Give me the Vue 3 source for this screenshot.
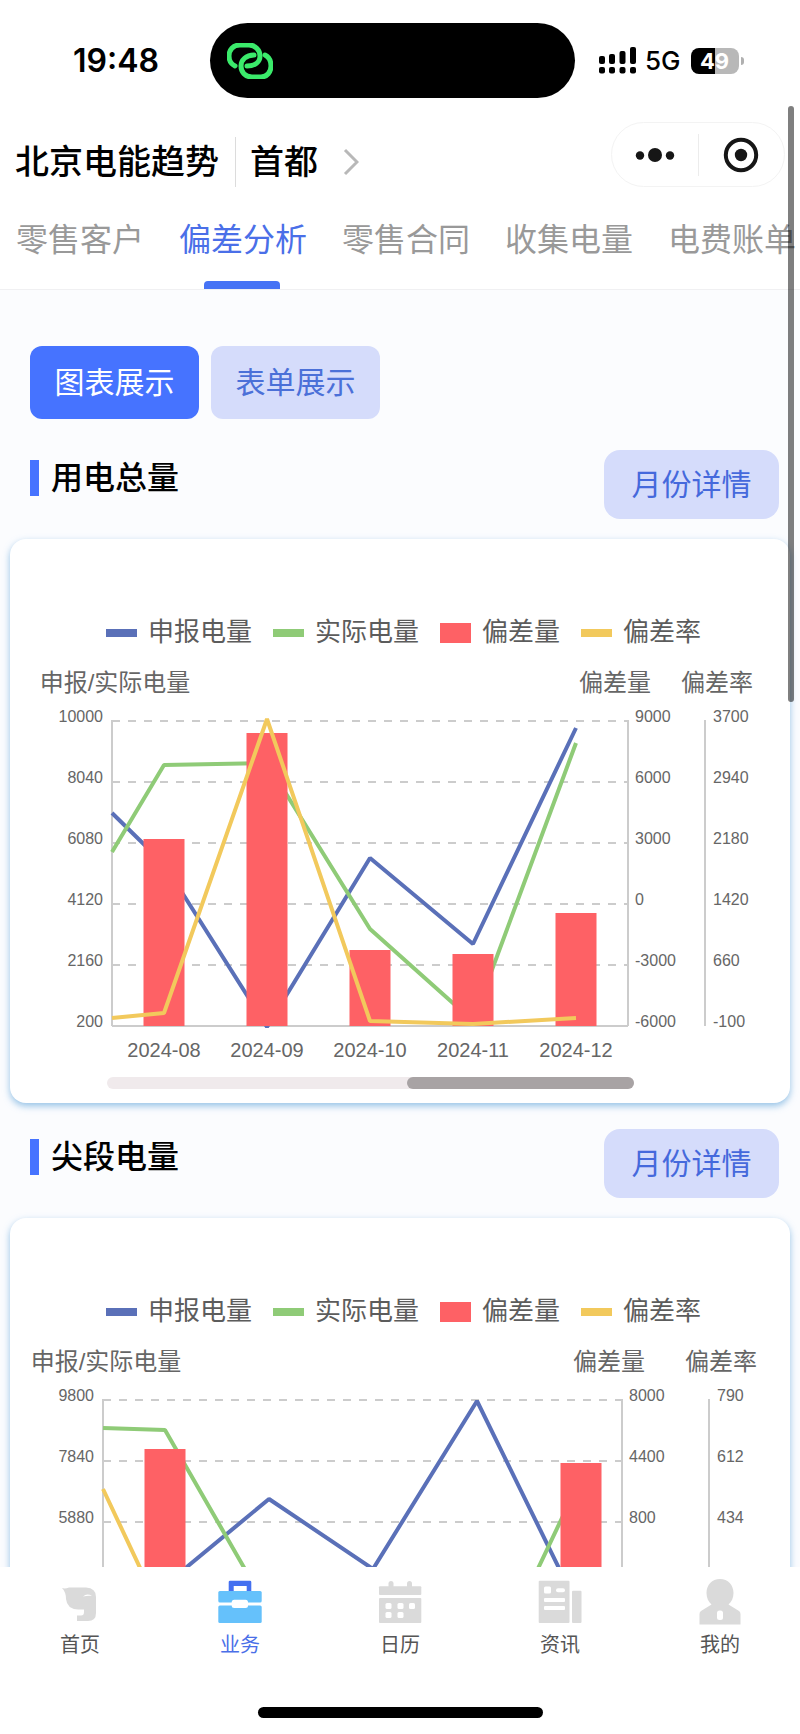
<script setup>
import { ref } from 'vue'

const tabs = ['零售客户', '偏差分析', '零售合同', '收集电量', '电费账单']
const activeTab = ref('偏差分析')

const views = ['图表展示', '表单展示']
const activeView = ref('图表展示')

const legend = [
  { name: '申报电量', kind: 'declared' },
  { name: '实际电量', kind: 'actual' },
  { name: '偏差量', kind: 'deviation' },
  { name: '偏差率', kind: 'rate' },
]

const gridRows = [0, 1, 2, 3, 4, 5]
const TOP = 71
const STEP = 61
const BOTTOM = TOP + STEP * 5
const BAR_WIDTH = 41
const rowY = (i) => TOP + STEP * i

const sections = [
  {
    title: '用电总量',
    left: 102,
    right: 618,
    rateAxis: 695,
    names: [105, 605, 707],
    leftTicks: ['10000', '8040', '6080', '4120', '2160', '200'],
    rightTicks: ['9000', '6000', '3000', '0', '-3000', '-6000'],
    rateTicks: ['3700', '2940', '2180', '1420', '660', '-100'],
    months: [
      { x: 154, label: '2024-08' },
      { x: 257, label: '2024-09' },
      { x: 360, label: '2024-10' },
      { x: 463, label: '2024-11' },
      { x: 566, label: '2024-12' },
    ],
    bars: [
      { x: 154, y: 189 },
      { x: 257, y: 83 },
      { x: 360, y: 300 },
      { x: 463, y: 304 },
      { x: 566, y: 263 },
    ],
    declared: '102,163 154,214 257,377 360,208 463,294 566,78',
    actual: '102,202 154,115 257,113 360,279 463,371 566,93',
    rate: '102,368 154,363 257,69 360,371 463,374 566,368',
    slider: { x: 97, width: 527, thumbX: 397, thumbWidth: 227 },
  },
  {
    title: '尖段电量',
    left: 93,
    right: 612,
    rateAxis: 699,
    names: [96, 599, 711],
    leftTicks: ['9800', '7840', '5880'],
    rightTicks: ['8000', '4400', '800'],
    rateTicks: ['790', '612', '434'],
    months: [],
    bars: [
      { x: 155, y: 120 },
      { x: 571, y: 134 },
    ],
    declared: '93,330 155,256 259,170 363,240 467,72 571,284',
    actual: '93,99 155,101 259,282 363,350 467,368 571,149',
    rate: '93,160 155,292 259,360 363,370 467,370 571,370',
    slider: null,
  },
]

const navItems = [
  { name: '首页', icon: 'home' },
  { name: '业务', icon: 'work' },
  { name: '日历', icon: 'calendar' },
  { name: '资讯', icon: 'news' },
  { name: '我的', icon: 'me' },
]
const activeNav = ref('业务')
</script>

<template>
  <div class="page">
    <header class="header">
      <div class="status">
        <div class="time">19:48</div>
        <div class="island">
          <svg class="link-icon" viewBox="0 0 46 36" aria-hidden="true">
            <path d="M8 23C4 21 2 17 2 13C2 7 6 2 13 2H22C28 2 33 7 33 13C33 19 28 23 20 23" />
            <path d="M27 12C19 12 14 17 14 23C14 29 18 34 25 34H34C40 34 44 29 44 23C44 18 42 14 38 12" />
          </svg>
        </div>
        <div class="signals">
          <svg class="bars-icon" viewBox="0 0 37 27" aria-hidden="true">
            <rect x="0" y="9" width="6" height="8" rx="2" />
            <rect x="10" y="7" width="6" height="10" rx="2" />
            <rect x="20.5" y="4" width="6" height="13" rx="2" />
            <rect x="31" y="0" width="6" height="17" rx="2" />
            <rect x="0" y="20" width="6" height="6.5" rx="2" />
            <rect x="10" y="20" width="6" height="6.5" rx="2" />
            <rect x="20.5" y="20" width="6" height="6.5" rx="2" />
            <rect x="31" y="20" width="6" height="6.5" rx="2" />
          </svg>
          <span class="network">5G</span>
          <span class="battery"><span class="level">49</span><i class="nub"></i></span>
        </div>
      </div>

      <div class="navbar">
        <div class="place">
          <h1 class="app-title">北京电能趋势</h1>
          <button class="region" type="button">
            首都
            <svg class="chevron" viewBox="0 0 16 28" aria-hidden="true"><path d="M2 2L14 14L2 26" /></svg>
          </button>
        </div>
        <div class="capsule">
          <button class="capsule-btn more" type="button" aria-label="更多">
            <svg viewBox="0 0 40 16" aria-hidden="true">
              <circle cx="5" cy="8.5" r="4.2" /><circle cx="20" cy="8" r="7" /><circle cx="35" cy="8.5" r="4.2" />
            </svg>
          </button>
          <button class="capsule-btn close" type="button" aria-label="关闭">
            <svg viewBox="0 0 36 36" aria-hidden="true">
              <circle class="ring" cx="18" cy="18" r="15.2" /><circle cx="18" cy="18" r="6.2" />
            </svg>
          </button>
        </div>
      </div>

      <nav class="tabs">
        <button
          v-for="tab in tabs"
          :key="tab"
          type="button"
          class="tab"
          :class="{ active: tab === activeTab }"
          @click="activeTab = tab"
        >{{ tab }}</button>
      </nav>
    </header>

    <main class="content">
      <div class="views">
        <button
          v-for="view in views"
          :key="view"
          type="button"
          class="view-btn"
          :class="{ active: view === activeView }"
          @click="activeView = view"
        >{{ view }}</button>
      </div>

      <section v-for="s in sections" :key="s.title" class="section">
        <div class="section-head">
          <h2 class="section-title">{{ s.title }}</h2>
          <button type="button" class="detail-btn">月份详情</button>
        </div>
        <div class="card">
          <ul class="legend">
            <li v-for="l in legend" :key="l.name" class="legend-item">
              <i class="swatch" :class="l.kind"></i>{{ l.name }}
            </li>
          </ul>
          <svg class="chart" viewBox="0 0 780 453" role="img" :aria-label="s.title">
            <g class="names">
              <text :x="s.names[0]" y="41">申报/实际电量</text>
              <text :x="s.names[1]" y="41">偏差量</text>
              <text :x="s.names[2]" y="41">偏差率</text>
            </g>
            <g class="grid">
              <line v-for="i in gridRows.slice(0, 5)" :key="i" :x1="s.left" :x2="s.right" :y1="rowY(i)" :y2="rowY(i)" />
            </g>
            <g class="axis">
              <line :x1="s.left" :x2="s.left" :y1="TOP - 1" :y2="BOTTOM" />
              <line :x1="s.right" :x2="s.right" :y1="TOP - 1" :y2="BOTTOM" />
              <line :x1="s.rateAxis" :x2="s.rateAxis" :y1="TOP - 1" :y2="BOTTOM" />
              <line :x1="s.left" :x2="s.right" :y1="BOTTOM" :y2="BOTTOM" />
            </g>
            <g class="ticks">
              <text v-for="(t, i) in s.leftTicks" :key="'l' + t" class="end" :x="s.left - 9" :y="rowY(i) + 1">{{ t }}</text>
              <text v-for="(t, i) in s.rightTicks" :key="'r' + t" :x="s.right + 7" :y="rowY(i) + 1">{{ t }}</text>
              <text v-for="(t, i) in s.rateTicks" :key="'p' + t" :x="s.rateAxis + 8" :y="rowY(i) + 1">{{ t }}</text>
            </g>
            <g class="months">
              <text v-for="m in s.months" :key="m.label" :x="m.x" y="407">{{ m.label }}</text>
            </g>
            <polyline class="line declared" :points="s.declared" />
            <polyline class="line actual" :points="s.actual" />
            <rect
              v-for="b in s.bars"
              :key="b.x"
              class="bar"
              :x="b.x - BAR_WIDTH / 2"
              :y="b.y"
              :width="BAR_WIDTH"
              :height="BOTTOM - b.y"
            />
            <polyline class="line rate" :points="s.rate" />
            <g v-if="s.slider">
              <rect class="track" :x="s.slider.x" y="427" :width="s.slider.width" height="12" rx="6" />
              <rect class="thumb" :x="s.slider.thumbX" y="427" :width="s.slider.thumbWidth" height="12" rx="6" />
            </g>
          </svg>
        </div>
      </section>
    </main>

    <footer class="tabbar">
      <nav class="tabbar-items">
        <a
          v-for="n in navItems"
          :key="n.name"
          href="#"
          class="tabbar-item"
          :class="{ active: n.name === activeNav }"
          @click.prevent="activeNav = n.name"
        >
          <svg class="tabbar-icon" viewBox="0 0 46 46" aria-hidden="true">
            <template v-if="n.icon === 'home'">
              <path d="M5 9Q8 10 12 8.5H29Q39 9 39 18V34Q39 42 31 42H20V36.5H24Q27 36.5 27 33V30.5H21Q10 30 9 20Q9 13 5 9Z" />
              <path class="hole" d="M26 17.5Q30 14 35 17Q31 16.500 26 17.5Z" />
            </template>
            <template v-else-if="n.icon === 'work'">
              <path class="handle" fill-rule="evenodd" d="M13 1.7H33Q34.3 1.7 34.3 3V13H11.7V3Q11.7 1.7 13 1.7ZM16.7 7V12H29.7V7Z" />
              <rect class="case" x="1.3" y="12" width="43.4" height="11.5" rx="1.5" />
              <rect class="case" x="1.3" y="26.5" width="43.4" height="17.5" rx="1.5" />
              <rect class="hole" x="14.7" y="20.7" width="16.3" height="8.3" rx="2.5" />
            </template>
            <template v-else-if="n.icon === 'calendar'">
              <rect x="11.5" y="2" width="5" height="10" rx="2.5" />
              <rect x="30" y="2" width="5" height="10" rx="2.5" />
              <rect x="2" y="7.3" width="42.3" height="8.7" rx="1" />
              <rect x="2" y="19" width="42.3" height="25" rx="1" />
              <rect class="hole" x="8.5" y="24" width="6" height="6" rx="1.5" />
              <rect class="hole" x="20.5" y="24" width="6" height="6" rx="1.5" />
              <rect class="hole" x="32" y="24" width="6" height="6" rx="1.5" />
              <rect class="hole" x="8.5" y="33" width="6" height="6" rx="1.5" />
              <rect class="hole" x="20.5" y="33" width="6" height="6" rx="1.5" />
            </template>
            <template v-else-if="n.icon === 'news'">
              <rect x="1.7" y="1.7" width="30.8" height="42.3" rx="1" />
              <rect x="35" y="11.7" width="9.5" height="32.3" rx="1" />
              <rect class="hole" x="7" y="7.5" width="7" height="7" rx="1.5" />
              <rect class="hole" x="19" y="9.3" width="9" height="4" rx="2" />
              <rect class="hole" x="7" y="19" width="21" height="4" rx="1" />
              <rect class="hole" x="7" y="27" width="21" height="4" rx="1" />
            </template>
            <template v-else>
              <path d="M23 0C31 0 36.5 6 36.5 14C36.5 19 34.5 23 31.5 25.5L42 32Q43.5 33 43.5 35V45.5H2.5V35Q2.5 33 4 32L14.5 25.5C11.5 23 9.5 19 9.5 14C9.5 6 15 0 23 0Z" />
              <rect class="hole" x="20" y="31.5" width="6" height="9.5" rx="2.5" />
            </template>
          </svg>
          {{ n.name }}
        </a>
      </nav>
      <div class="home-indicator"></div>
    </footer>

    <div class="scrollbar"></div>
  </div>
</template>

<style>
body {
  margin: 0;
}
</style>

<style scoped>
.page {
  position: relative;
  display: flex;
  flex-direction: column;
  height: 100vh;
  overflow: hidden;
  background: #fff;
  color: #000;
  font-family: 'Liberation Sans', 'Noto Sans CJK SC', sans-serif;
}
button {
  padding: 0;
  border: 0;
  background: none;
  color: inherit;
  font: inherit;
  white-space: nowrap;
}
h1,
h2,
ul {
  margin: 0;
  padding: 0;
  font-weight: 500;
  list-style: none;
}

.header {
  flex: none;
  background: #fff;
  border-bottom: 1px solid #f0f0f2;
}
.status {
  display: grid;
  grid-template-columns: 210fr 365fr 225fr;
  align-items: center;
  padding: 23px 0 24px;
  font-family: Inter, sans-serif;
}
.time {
  padding-left: 22px;
  text-align: center;
  font-size: 32px;
  font-weight: 600;
}
.island {
  display: flex;
  align-items: center;
  height: 75px;
  padding-left: 17px;
  border-radius: 38px;
  background: #000;
}
.link-icon {
  width: 46px;
  height: 36px;
  fill: none;
  stroke: #3bea6b;
  stroke-width: 5;
  stroke-linecap: round;
}
.signals {
  display: flex;
  align-items: center;
  padding-left: 24px;
}
.bars-icon {
  width: 37px;
  height: 27px;
}
.network {
  margin: 0 10px 0 9px;
  font-size: 26px;
  font-weight: 500;
}
.battery {
  display: flex;
  align-items: center;
  gap: 2px;
}
.level {
  width: 48px;
  border-radius: 8px;
  background: linear-gradient(90deg, #000 50%, #b8b8b8 50%);
  color: #fff;
  font-size: 22px;
  font-weight: 700;
  line-height: 26px;
  text-align: center;
}
.nub {
  width: 3px;
  height: 8px;
  border-radius: 0 4px 4px 0;
  background: #b0b0b0;
}

.navbar {
  display: flex;
  align-items: center;
  justify-content: space-between;
  padding: 0 15px;
}
.place {
  display: flex;
  align-items: center;
  margin-top: 14px;
  font-size: 34px;
  font-weight: 500;
  line-height: 50px;
}
.app-title {
  padding-right: 16px;
  border-right: 1px solid #dcdcdc;
  font-size: 34px;
}
.region {
  display: flex;
  align-items: center;
  gap: 25px;
  padding-left: 14px;
}
.chevron {
  width: 16px;
  height: 28px;
  fill: none;
  stroke: #b8b8b8;
  stroke-width: 3;
}
.capsule {
  display: flex;
  align-items: center;
  box-sizing: border-box;
  width: 174px;
  height: 65px;
  border: 1px solid #f3f3f3;
  border-radius: 33px;
}
.capsule-btn {
  display: flex;
  flex: 1;
  align-items: center;
  justify-content: center;
  height: 42px;
  fill: #161616;
}
.more {
  border-right: 1px solid #ececec;
}
.more svg {
  width: 40px;
  height: 16px;
}
.close svg {
  width: 36px;
  height: 36px;
}
.ring {
  fill: none;
  stroke: #161616;
  stroke-width: 4;
}

.tabs {
  display: flex;
  gap: 35px;
  height: 102px;
  padding-left: 16px;
  overflow: hidden;
}
.tab {
  position: relative;
  flex: none;
  padding-bottom: 3px;
  color: #999;
  font-size: 32px;
}
.tab.active {
  color: #4a6fe8;
}
.tab.active::after {
  content: '';
  position: absolute;
  bottom: 0;
  left: 50%;
  width: 76px;
  height: 8px;
  margin-left: -39px;
  border-radius: 4px 4px 0 0;
  background: #4673f5;
}

.content {
  flex: 1;
  min-height: 0;
  overflow: hidden;
  background: #fbfcfe;
}
.views {
  display: flex;
  gap: 12px;
  padding: 56px 30px 31px;
}
.view-btn {
  width: 169px;
  height: 73px;
  padding-bottom: 5px;
  border-radius: 12px;
  background: #d5dcfb;
  color: #4b70d8;
  font-size: 30px;
}
.view-btn.active {
  background: #4673ff;
  color: #fff;
}
.section {
  padding: 0 10px 26px;
}
.section-head {
  display: flex;
  align-items: flex-start;
  justify-content: space-between;
  padding: 0 11px 20px 20px;
}
.section-title {
  margin-top: 10px;
  padding-left: 12px;
  border-left: 9px solid #4673ff;
  font-size: 32px;
  line-height: 36px;
}
.detail-btn {
  width: 175px;
  height: 69px;
  padding-bottom: 5px;
  border-radius: 16px;
  background: #d5dcfb;
  color: #4569dc;
  font-size: 30px;
}
.card {
  padding-top: 74px;
  border-radius: 16px;
  background: #fff;
  box-shadow: 0 3px 7px rgba(80, 155, 215, 0.6);
}
.legend {
  display: flex;
  justify-content: center;
  gap: 21px;
  padding-left: 7px;
  color: #5c5c5c;
  font-size: 26px;
  line-height: 38px;
  white-space: nowrap;
}
.legend-item {
  display: flex;
  align-items: center;
  gap: 11px;
  font-weight: 400;
}
.swatch {
  width: 31px;
  height: 8px;
  margin-top: 2px;
}
.swatch.declared {
  background: #5a70b8;
}
.swatch.actual {
  background: #8fcb77;
}
.swatch.deviation {
  height: 20px;
  background: #fe6165;
}
.swatch.rate {
  background: #f2c95c;
}
.chart {
  display: block;
  width: 100%;
  height: auto;
  margin-top: -1px;
}
.chart text {
  fill: #666;
}
.names text {
  font-size: 24px;
  text-anchor: middle;
}
.grid line {
  stroke: #ccc;
  stroke-width: 2;
  stroke-dasharray: 8 8;
}
.axis line {
  stroke: #ccc;
  stroke-width: 2;
}
.ticks text {
  font-size: 16px;
}
.ticks .end {
  text-anchor: end;
}
.months text {
  font-size: 20px;
  text-anchor: middle;
}
.line {
  fill: none;
  stroke-width: 4;
  stroke-linejoin: bevel;
}
.line.declared {
  stroke: #5a70b8;
}
.line.actual {
  stroke: #8fcb77;
}
.line.rate {
  stroke: #f2c95c;
}
.bar {
  fill: #fe6165;
}
.track {
  fill: #f0eaec;
}
.thumb {
  fill: #a8a3a4;
}

.tabbar {
  display: flex;
  flex: none;
  flex-direction: column;
  align-items: center;
  padding: 12px 0 16px;
  background: #fff;
}
.tabbar-items {
  display: flex;
  width: 100%;
}
.tabbar-item {
  display: flex;
  flex: 1;
  flex-direction: column;
  align-items: center;
  gap: 6px;
  color: #555;
  font-size: 20px;
  line-height: 28px;
  text-decoration: none;
}
.tabbar-item.active {
  color: #4a6fe8;
}
.tabbar-icon {
  width: 46px;
  height: 46px;
  fill: #dadada;
}
.tabbar-icon .hole {
  fill: #fff;
}
.tabbar-icon .handle {
  fill: #4470f0;
}
.tabbar-icon .case {
  fill: #65c1fb;
}
.home-indicator {
  width: 285px;
  height: 11px;
  margin-top: 48px;
  border-radius: 6px;
  background: #000;
}
.scrollbar {
  position: absolute;
  top: 106px;
  right: 6px;
  width: 6px;
  height: 596px;
  border-radius: 3px;
  background: rgba(0, 0, 0, 0.5);
}
</style>
